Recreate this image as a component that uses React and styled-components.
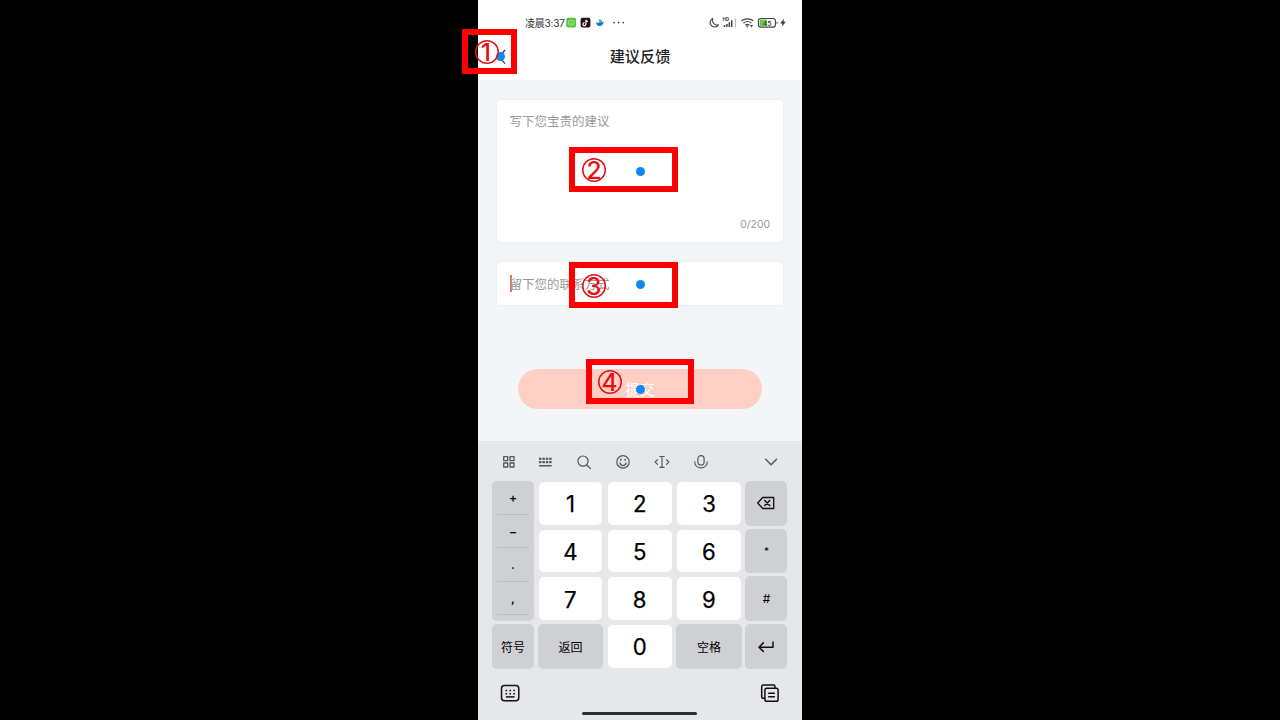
import React from "react";
import styled, { createGlobalStyle } from "styled-components";

const Global = createGlobalStyle`
  * { box-sizing: border-box; }
  body { margin: 0; background: #000; overflow: hidden; }
`;

const Stage = styled.div`
  position: relative;
  width: 1280px;
  height: 720px;
  background: #000;
  display: flex;
  justify-content: center;
  font-family: Inter, "Noto Sans CJK SC", sans-serif;
`;
const Phone = styled.main`
  width: 324px;
  height: 720px;
  background: #f4f5f7;
  display: flex;
  flex-direction: column;
`;
const Header = styled.header`
  height: 80px;
  background: #fff;
  flex: none;
`;
const StatusBar = styled.div`
  height: 34px;
  padding: 11px 15.5px 0 47px;
  display: flex;
  justify-content: space-between;
`;
const StatusGroup = styled.div`
  display: flex;
  align-items: center;
  height: 23px;
`;
const Clock = styled.span`
  font-size: 10px;
  line-height: 22px;
  letter-spacing: -0.2px;
  color: #333;
  width: 41px;
  white-space: nowrap;
`;
const TitleBar = styled.div`
  height: 46px;
  display: grid;
  grid-template-columns: 60px 1fr 60px;
  align-items: center;
`;
const BackIcon = styled.svg`
  margin-left: 20px;
`;
const Title = styled.h1`
  margin: 0;
  text-align: center;
  font-size: 15.2px;
  font-weight: 500;
  line-height: 44px;
  color: #222;
`;
const Form = styled.section`
  height: 361px;
  padding: 20px 19px 0;
  display: flex;
  flex-direction: column;
`;
const Field = styled.div`
  height: ${(p) => p.$height}px;
  margin-bottom: ${(p) => p.$gap}px;
  padding: 0 13px 0 12.5px;
  background: #fff;
  border-radius: 4px;
  box-shadow: 0 0 1px 0.5px #edeef0;
  display: flex;
  flex-direction: column;
  justify-content: ${(p) => (p.$center ? "center" : "space-between")};
`;
const Placeholder = styled.span`
  font-size: 12.5px;
  line-height: 18px;
  color: #999;
  margin-top: ${(p) => p.$top || 0}px;
`;
const Counter = styled.span`
  align-self: flex-end;
  font-size: 10.4px;
  line-height: 14px;
  color: #999;
  margin-bottom: 10.5px;
`;
const InputLine = styled.div`
  display: flex;
  align-items: center;
  padding-top: 2px;
`;
const Caret = styled.i`
  width: 2px;
  height: 17px;
  margin: 0 -2px 2px 0;
  background: #e4775f;
`;
const Submit = styled.button`
  width: 244px;
  height: 40px;
  align-self: center;
  padding: 0;
  border: 0;
  border-radius: 20px;
  background: #ffcfc4;
  color: #fff;
  font: 400 14.6px/40px "Noto Sans CJK SC", sans-serif;
`;
const Keyboard = styled.section`
  height: 279px;
  background: #e6e7eb;
`;
const Tools = styled.div`
  height: 40px;
  padding: 13px 22px 0 22px;
  display: flex;
`;
const Tool = styled.span`
  width: 17px;
  height: 17px;
  margin-right: ${(p) => p.$gap}px;
  display: flex;
  svg { display: block; flex: none; }
`;
const Keys = styled.div`
  margin: 0 14px;
  display: grid;
  grid-template-columns: 42px 66.3px 66.3px 66.3px 42.6px;
  column-gap: 3px;
  grid-template-rows: repeat(4, 44.5px);
  row-gap: 3.2px;
  width: 296px;
`;
const Key = styled.div`
  margin: ${(p) => (p.$light ? "1px" : "0")};
  margin-left: ${(p) => (p.$first ? "0" : p.$light ? "1.5px" : "0.5px")};
  border-radius: 5px;
  background: ${(p) => (p.$light ? "#fff" : "#cfd0d4")};
  color: #000;
  -webkit-text-stroke: ${(p) => (p.$light ? "0.25px #000" : "0")};
  font-size: ${(p) => p.$size || 22.2}px;
  display: flex;
  align-items: center;
  justify-content: center;
  padding-top: ${(p) => (p.$light ? 1 : 0)}px;
`;
const Symbols = styled.div`
  grid-row: 1 / span 3;
  padding: 0 5px;
  border-radius: 5px;
  background: #cfd0d4;
`;
const SymbolCell = styled.div`
  height: 33.6px;
  border-bottom: 1px solid #bcbdc1;
  font-size: 12px;
  font-weight: 600;
  line-height: 34px;
  text-align: center;
  color: #080808;
`;
const Footer = styled.div`
  height: 41px;
  padding: 15px 22px 0 22px;
  display: flex;
  justify-content: space-between;
`;
const HomeBar = styled.div`
  width: 115px;
  height: 3px;
  margin: 2px 0 0 104px;
  border-radius: 2px;
  background: #2c2e31;
`;
const Marker = styled.div`
  position: absolute;
  left: ${(p) => p.$x}px;
  top: ${(p) => p.$y}px;
  width: ${(p) => p.$w}px;
  height: ${(p) => p.$h}px;
  border: 6px solid #fe0000;
`;
const NumberRing = styled.span`
  position: absolute;
  left: ${(p) => p.$x}px;
  top: ${(p) => p.$y}px;
  width: 24px;
  height: 24px;
  margin: -12px 0 0 -12px;
  border-radius: 50%;
  box-shadow: inset 0 0 0 1.5px #e60f14;
  display: flex;
  align-items: center;
  justify-content: center;
`;
const NumberText = styled.span`
  flex: none;
  width: 36px;
  height: 36px;
  display: flex;
  align-items: center;
  justify-content: center;
  clip-path: circle(11.5px);
  font: 500 24.5px/36px Inter, sans-serif;
  color: #e60f14;
`;
const Dot = styled.i`
  position: absolute;
  left: ${(p) => p.$x}px;
  top: ${(p) => p.$y}px;
  width: 9px;
  height: 9px;
  margin: -4.5px 0 0 -4.5px;
  border-radius: 50%;
  background: #0d88f2;
`;

const Line = ({ w = 17, h = 17, sw = 1.2, color = "#55575b", children }) => (
  <svg width={w} height={h} viewBox={`0 0 ${w} ${h}`} fill="none" stroke={color} strokeWidth={sw} strokeLinecap="round" strokeLinejoin="round">
    {children}
  </svg>
);

const AppIcons = () => (
  <svg width="62" height="12" viewBox="0 0 62 12">
    <rect x="0.3" y="0.8" width="9.8" height="9.8" rx="2" fill="#55c33e" />
    <rect x="2.5" y="3.4" width="5.6" height="4.6" rx="1.6" fill="none" stroke="#b9efaa" strokeWidth="0.8" />
    <path d="M3.6 6.1h3.4" stroke="#b9efaa" strokeWidth="0.8" />
    <rect x="14.6" y="0.8" width="9.8" height="9.8" rx="2" fill="#210d1c" />
    <path d="M19.9 2.7v4.5a1.5 1.5 0 1 1-1.4-1.5M19.9 2.9c.2 1 .9 1.6 2 1.7" fill="none" stroke="#fff" strokeWidth="1.2" />
    <path d="M30 4.9c.7 1.2 2.2 1.2 3.300.5 1-.8.6-2.300-.4-2.800 2.600-.2 3.200 1.500 3 2.600l1.900-.6C37.200 7.900 35.400 9.300 33.500 9.100 31.500 9 30.100 7.200 30 4.900Z" fill="#1478bd" />
    <path d="M32.600 2.500c2.200-.4 3.700 1 3.500 2.700l-2.200.6Z" fill="#38b5e7" />
    <g fill="#444"><circle cx="48" cy="5.6" r="0.9" /><circle cx="52.6" cy="5.6" r="0.9" /><circle cx="57.2" cy="5.6" r="0.9" /></g>
  </svg>
);

const SystemIcons = () => (
  <svg width="80" height="14" viewBox="0.5 0 80 14">
    <path d="M6.2 2.4A4.5 4.5 0 1 0 11.9 8.9 4.9 4.9 0 0 1 6.2 2.4Z" fill="none" stroke="#444" strokeWidth="1.1" strokeLinejoin="round" />
    <text x="16" y="5.3" fontFamily="Roboto" fontWeight="700" fontSize="4.8" fill="#444">HD</text>
    <path d="M18 9v2M20.4 8v3M22.8 6.3v4.7M25.2 4.2v6.8" stroke="#444" strokeWidth="1.5" />
    <path d="M28.9 2.6v8.6" stroke="#bbb" strokeWidth="1.1" />
    <path d="M34.9 4.8c3.5-2.7 8.5-2.7 12 0M36.9 7c2.4-1.8 5.6-1.8 8 0M38.9 9.1c1.2-.9 2.8-.9 4 0" fill="none" stroke="#444" strokeWidth="1.2" />
    <path d="M39.2 9.6h3L40.7 11.6ZM43.4 9h3.2L45 11.5Z" fill="#444" />
    <rect x="51.9" y="2.5" width="17" height="8.6" rx="2.3" fill="#fff" stroke="#444" strokeWidth="1.1" />
    <path d="M54.4 3.6h6v6.4h-6a1.3 1.3 0 0 1-1.3-1.3V4.9A1.3 1.3 0 0 1 54.4 3.6Z" fill="#66c93c" />
    <text x="56.5" y="9.5" fontFamily="Roboto" fontWeight="500" fontSize="7.4" fill="#444">45</text>
    <path d="M70.5 5.8v2" stroke="#444" strokeWidth="1" />
    <path d="M77.6 2.6 73.8 7.5h2.3L75.2 11l4-5.2h-2.3Z" fill="#333" />
  </svg>
);

const GridIcon = () => (
  <Line sw={1.3}>
    <rect x="3.7" y="2.7" width="4" height="4" /><rect x="10" y="2.7" width="4" height="4" />
    <rect x="3.7" y="9" width="4" height="4" /><rect x="10" y="9" width="4" height="4" />
  </Line>
);
const KeypadIcon = () => (
  <svg width="17" height="17" viewBox="0 0 17 17" fill="#55575b">
    {[2, 5.4, 8.8, 12.2].map((x) => <React.Fragment key={x}><rect x={x} y="3.7" width="2.4" height="2.2" /><rect x={x} y="7" width="2.4" height="2.2" /></React.Fragment>)}
    <rect x="2" y="11" width="12.6" height="1.5" />
  </svg>
);
const SearchIcon = () => <Line><circle cx="7" cy="7.1" r="5.1" /><path d="m10.700 11 3.700 3.500" /></Line>;
const SmileIcon = () => (
  <Line><circle cx="8" cy="7.9" r="6.2" /><path d="M5 8.9c.4 3.5 5.6 3.5 6 0" /><path d="M5.9 5.3v1M10.1 5.3v1" strokeWidth="1.4" /></Line>
);
const CursorIcon = () => <Line><path d="M5.8 2.5h4.4M8 2.5v10.8M5.8 13.3h4.4M3.5 5.6 1.2 8 3.5 10.4M12.5 5.6 14.8 8 12.5 10.4" /></Line>;
const MicIcon = () => <Line><rect x="4.9" y="1.7" width="6.2" height="9.3" rx="3.1" /><path d="M1.8 7.9c.2 8 12.2 8 12.4 0" /></Line>;
const ChevronIcon = () => <Line sw={1.5}><path d="m2.7 5.3 5.4 5.4 5.4-5.4" /></Line>;
const DeleteIcon = () => (
  <Line w={20} h={16} color="#111" sw={1.3}><path d="M6.7 2.5h11v11h-11L1.7 8Z" /><path d="m8.7 5.5 5 5M13.7 5.5l-5 5" strokeWidth="1.5" /></Line>
);
const EnterIcon = () => <Line w={18} h={16} color="#111" sw={1.5}><path d="M16 4v5.2H2.3M6.3 4.9 2 9.2l4.3 4.2" /></Line>;
const BoardIcon = () => (
  <Line w={20} h={20} color="#111" sw={1.5}>
    <rect x="1.5" y="1.5" width="17.3" height="15.3" rx="3" />
    <path d="M5.9 12.9h8.7" strokeLinecap="butt" />
    <path d="M5.5 6.6h1.6M9.4 6.6H11M13.3 6.6h1.6M5.5 9.8h1.6M9.4 9.8H11M13.3 9.8h1.6" strokeLinecap="butt" />
  </Line>
);
const CopyIcon = () => (
  <Line w={20} h={20} color="#111" sw={1.5}>
    <path d="M4.7 14.3H3.2a1.5 1.5 0 0 1-1.5-1.5V2.5A1.5 1.5 0 0 1 3.2 1H13.5A1.5 1.5 0 0 1 15 2.5v1.2" />
    <rect x="4.9" y="4.3" width="13.2" height="13" rx="1.8" /><path d="M8.700 9.2h5.7M8.700 12.700h5.7" />
  </Line>
);

export default function App() {
  return (
    <>
      <Global />
      <Stage>
        <Phone>
          <Header>
            <StatusBar>
              <StatusGroup><Clock>凌晨3:37</Clock><AppIcons /></StatusGroup>
              <StatusGroup><SystemIcons /></StatusGroup>
            </StatusBar>
            <TitleBar>
              <BackIcon width="10" height="16" viewBox="0 0 10 16" fill="none" stroke="#333" strokeWidth="1.3"><path d="M7 1 1.2 7.8 7 14.6" /></BackIcon>
              <Title>建议反馈</Title>
            </TitleBar>
          </Header>
          <Form>
            <Field $height={142} $gap={20}>
              <Placeholder $top={13.4}>写下您宝贵的建议</Placeholder>
              <Counter>0/200</Counter>
            </Field>
            <Field $height={43} $gap={64} $center>
              <InputLine><Caret /><Placeholder>留下您的联系方式</Placeholder></InputLine>
            </Field>
            <Submit>提交</Submit>
          </Form>
          <Keyboard>
            <Tools>
              <Tool $gap={20}><GridIcon /></Tool>
              <Tool $gap={22}><KeypadIcon /></Tool>
              <Tool $gap={22}><SearchIcon /></Tool>
              <Tool $gap={22}><SmileIcon /></Tool>
              <Tool $gap={22}><CursorIcon /></Tool>
              <Tool $gap={53}><MicIcon /></Tool>
              <Tool $gap={0}><ChevronIcon /></Tool>
            </Tools>
            <Keys>
              <Symbols>{["+", "−", ".", ","].map((s) => <SymbolCell key={s}>{s}</SymbolCell>)}</Symbols>
              <Key $light>1</Key><Key $light>2</Key><Key $light>3</Key><Key><DeleteIcon /></Key>
              <Key $light>4</Key><Key $light>5</Key><Key $light>6</Key><Key $size={10}>*</Key>
              <Key $light>7</Key><Key $light>8</Key><Key $light>9</Key><Key $size={12}>#</Key>
              <Key $first $size={12}>符号</Key><Key $size={12}>返回</Key><Key $light>0</Key><Key $size={12}>空格</Key><Key><EnterIcon /></Key>
            </Keys>
            <Footer><BoardIcon /><CopyIcon /></Footer>
            <HomeBar />
          </Keyboard>
        </Phone>
        <Dot $x={500.5} $y={56.5} />
        <Dot $x={640} $y={171} />
        <Dot $x={640} $y={284} />
        <Dot $x={640} $y={389} />
        <Marker $x={462} $y={29} $w={55} $h={45} />
        <Marker $x={569} $y={147} $w={109} $h={45} />
        <Marker $x={569} $y={262} $w={109} $h={46} />
        <Marker $x={586} $y={359} $w={108} $h={45} />
        <NumberRing $x={486.5} $y={52}><NumberText>①</NumberText></NumberRing>
        <NumberRing $x={594} $y={169.5}><NumberText>②</NumberText></NumberRing>
        <NumberRing $x={594} $y={285.5}><NumberText>③</NumberText></NumberRing>
        <NumberRing $x={610} $y={381.5}><NumberText>④</NumberText></NumberRing>
      </Stage>
    </>
  );
}
